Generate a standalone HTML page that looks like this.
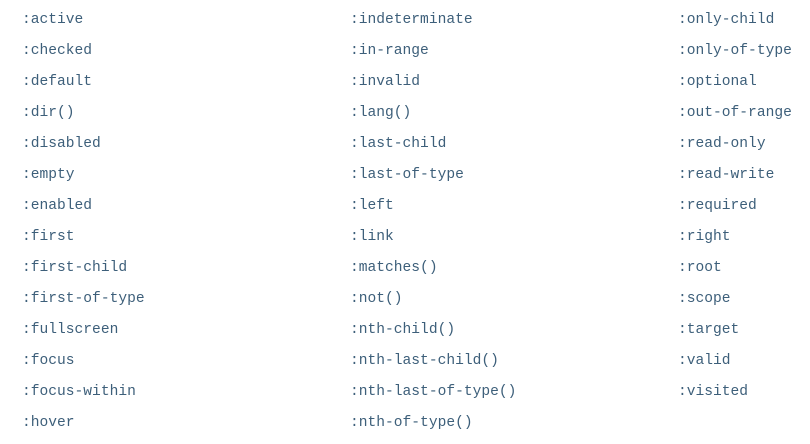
<!DOCTYPE html><html><head><style>
body{margin:0;background:#fff;width:810px;height:435px;overflow:hidden}
.c{position:absolute;top:10px;font:14.6px "Liberation Mono",monospace;color:#3d5f7a}
.c div{height:31px;line-height:20px}
</style></head><body>
<div class="c" style="left:22px"><div>:active</div><div>:checked</div><div>:default</div><div>:dir()</div><div>:disabled</div><div>:empty</div><div>:enabled</div><div>:first</div><div>:first-child</div><div>:first-of-type</div><div>:fullscreen</div><div>:focus</div><div>:focus-within</div><div>:hover</div></div>
<div class="c" style="left:350px"><div>:indeterminate</div><div>:in-range</div><div>:invalid</div><div>:lang()</div><div>:last-child</div><div>:last-of-type</div><div>:left</div><div>:link</div><div>:matches()</div><div>:not()</div><div>:nth-child()</div><div>:nth-last-child()</div><div>:nth-last-of-type()</div><div>:nth-of-type()</div></div>
<div class="c" style="left:678px"><div>:only-child</div><div>:only-of-type</div><div>:optional</div><div>:out-of-range</div><div>:read-only</div><div>:read-write</div><div>:required</div><div>:right</div><div>:root</div><div>:scope</div><div>:target</div><div>:valid</div><div>:visited</div></div>
</body></html>
